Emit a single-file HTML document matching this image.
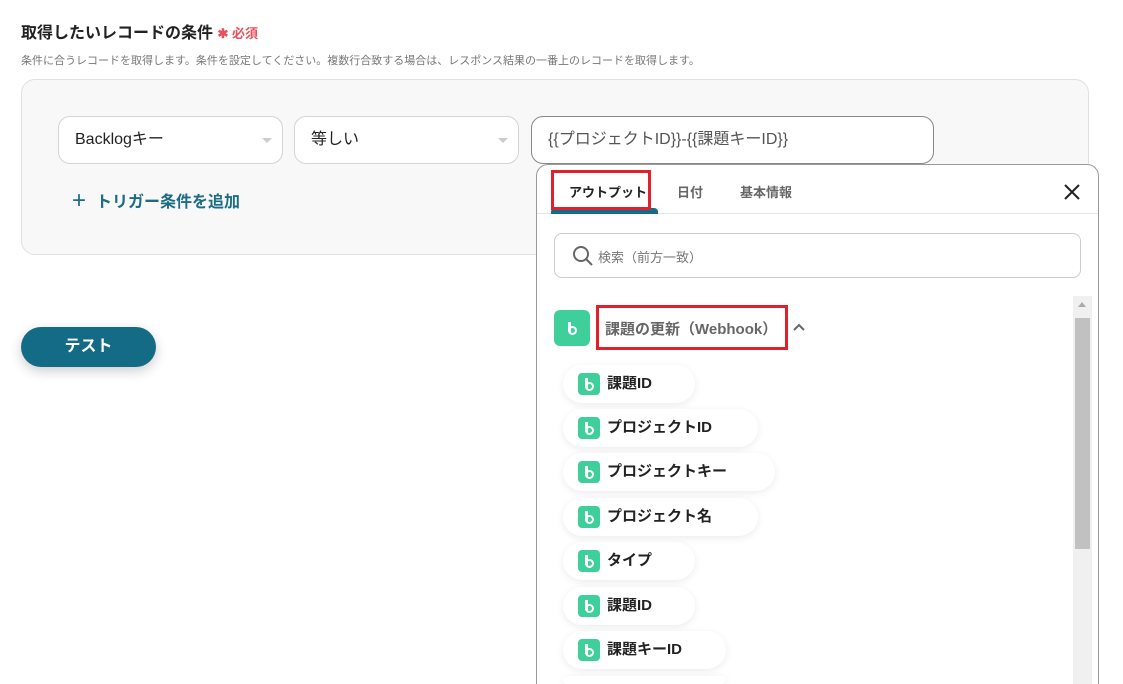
<!DOCTYPE html>
<html style="width:1123px;height:684px;overflow:hidden"><head><meta charset="utf-8"><style>
*{box-sizing:border-box;margin:0;padding:0}
body{width:1123px;height:684px;overflow:hidden;background:#fff;font-family:"Liberation Sans","Noto Sans CJK JP",sans-serif;position:relative;color:#333}
.abs{position:absolute}
.sel{position:absolute;top:116px;height:48px;border:1px solid #d4d4d4;border-radius:12px;background:#fff;font-size:16px;padding-left:16px;line-height:46px;color:#222}
.caret{position:absolute;right:10px;top:21px;width:0;height:0;border-left:5px solid transparent;border-right:5px solid transparent;border-top:5px solid #ccc}
.pill{position:absolute;left:563px;height:38px;background:#fff;border-radius:19px;box-shadow:0 2px 8px rgba(0,0,0,.08);font-size:15px;font-weight:bold;color:#222;line-height:38px;padding-left:44px}
.ic{position:absolute;left:15px;top:8px;width:22px;height:22px;background:#3fcf9b;border-radius:4px}
.ic:after{content:"";position:absolute;left:7px;top:9px;width:5px;height:5px;border:2.5px solid #fff;border-radius:50%}
.ic:before{content:"";position:absolute;left:7px;top:5px;width:2.5px;height:10px;background:#fff}
</style></head><body>
<div class="abs" style="left:21px;top:19px;font-size:16px;font-weight:bold;color:#222">取得したいレコードの条件 <span style="color:#e8505b;font-size:13px">✱ 必須</span></div>
<div class="abs" style="left:21px;top:52px;font-size:11px;color:#777">条件に合うレコードを取得します。条件を設定してください。複数行合致する場合は、レスポンス結果の一番上のレコードを取得します。</div>
<div class="abs" style="left:21px;top:79px;width:1068px;height:176px;background:#f8f8f8;border:1px solid #e0e0e0;border-radius:14px"></div>
<div class="sel" style="left:58px;width:225px">Backlogキー<div class="caret"></div></div>
<div class="sel" style="left:294px;width:225px">等しい<div class="caret"></div></div>
<div class="sel" style="left:531px;width:403px;border-color:#888;color:#555">{{プロジェクトID}}-{{課題キーID}}</div>
<div class="abs" style="left:72px;top:186px;font-size:16px;font-weight:bold;color:#1b6c84"><span style="font-size:24px;font-weight:normal;margin-right:10px;position:relative;top:1px">+</span>トリガー条件を追加</div>
<div class="abs" style="left:21px;top:327px;width:135px;height:40px;background:#136b86;border-radius:20px;color:#fff;font-size:16px;font-weight:bold;text-align:center;line-height:40px;box-shadow:0 4px 12px rgba(0,0,0,.2)">テスト</div>

<div class="abs" style="left:536px;top:164px;width:563px;height:540px;background:#fff;border:1px solid #999;border-radius:12px;overflow:hidden"></div>
<div class="abs" style="left:537px;top:213px;width:561px;height:1px;background:#e4e4e4"></div>
<div class="abs" style="left:551px;top:208px;width:107px;height:6px;background:#136b86;border-radius:4px 4px 0 0"></div>
<div class="abs" style="left:551px;top:170px;width:100px;height:40px;border:3px solid #e0202a"></div>
<div class="abs" style="left:569px;top:182px;font-size:13px;font-weight:bold;color:#222">アウトプット</div>
<div class="abs" style="left:677px;top:182px;font-size:13px;font-weight:bold;color:#666">日付</div>
<div class="abs" style="left:740px;top:182px;font-size:13px;font-weight:bold;color:#666">基本情報</div>
<svg class="abs" style="left:1062px;top:182px" width="20" height="20" viewBox="0 0 20 20"><path d="M3 3L17 17M17 3L3 17" stroke="#222" stroke-width="2"/></svg>
<div class="abs" style="left:554px;top:233px;width:527px;height:45px;border:1px solid #ccc;border-radius:8px"></div>
<svg class="abs" style="left:572px;top:245px" width="22" height="22" viewBox="0 0 22 22"><circle cx="9" cy="9" r="7" fill="none" stroke="#666" stroke-width="2"/><path d="M14 14L20 20" stroke="#666" stroke-width="2"/></svg>
<div class="abs" style="left:598px;top:247px;font-size:13px;color:#777">検索（前方一致）</div>
<div class="abs" style="left:1073px;top:296px;width:19px;height:390px;background:#f0f0f0"></div>
<div class="abs" style="left:1075px;top:318px;width:15px;height:231px;background:#c1c1c1"></div>
<div class="abs" style="left:1078px;top:302px;width:0;height:0;border-left:4px solid transparent;border-right:4px solid transparent;border-bottom:5px solid #aaa"></div>
<div class="abs" style="left:554px;top:310px;width:36px;height:36px;background:#3fcf9b;border-radius:6px"><div class="ic" style="left:7px;top:7px;background:none"></div></div>
<div class="abs" style="left:596px;top:305px;width:192px;height:45px;border:3px solid #e0202a"></div>
<div class="abs" style="left:605px;top:318px;font-size:15px;font-weight:bold;color:#666">課題の更新（Webhook）</div>
<svg class="abs" style="left:792px;top:321px" width="14" height="12" viewBox="0 0 14 12"><path d="M2 9L7 4L12 9" fill="none" stroke="#666" stroke-width="2"/></svg>

<div class="pill" style="top:365px;width:132px"><div class="ic"></div>課題ID</div>
<div class="pill" style="top:409px;width:195px"><div class="ic"></div>プロジェクトID</div>
<div class="pill" style="top:453px;width:212px"><div class="ic"></div>プロジェクトキー</div>
<div class="pill" style="top:498px;width:195px"><div class="ic"></div>プロジェクト名</div>
<div class="pill" style="top:542px;width:132px"><div class="ic"></div>タイプ</div>
<div class="pill" style="top:587px;width:132px"><div class="ic"></div>課題ID</div>
<div class="pill" style="top:631px;width:163px"><div class="ic"></div>課題キーID</div>
<div class="pill" style="top:676px;width:163px;height:8px;overflow:hidden"><div class="ic"></div></div>
</body></html>
